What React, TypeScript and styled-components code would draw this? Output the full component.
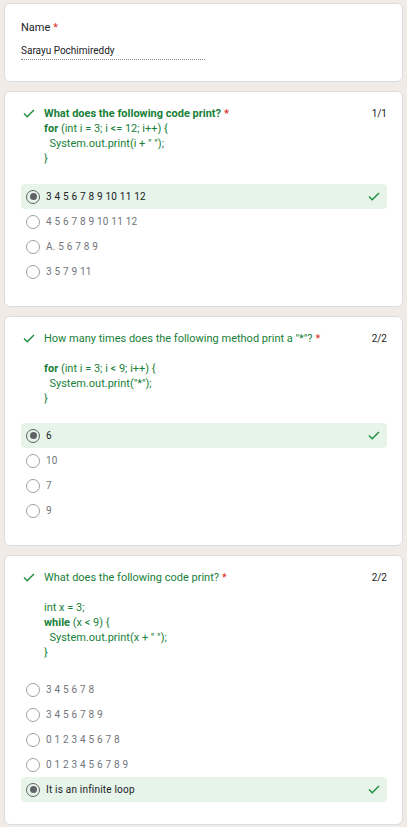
import * as React from 'react';
import styled, {createGlobalStyle} from 'styled-components';

const GlobalStyle = createGlobalStyle`
  body {
    margin: 0;
    background: #f0ebe6;
    font-family: Roboto, "Liberation Sans", Arial, sans-serif;
    color: #202124;
  }
`;

const Page = styled.div`
  display: flex;
  flex-direction: column;
  gap: 9px;
  padding: 3px 4px 4px;
`;

const Card = styled.div`
  background: #fff;
  border: 1px solid #dadce0;
  border-radius: 6px;
  padding: 14px 15px 22px 16px;
`;

const NameCard = styled(Card)`
  padding: 16px 16px 21px;
`;

const Label = styled.div`
  font-size: 11px;
  line-height: 16px;
`;

const Star = styled.span`
  color: #d93025;
  margin-left: 3px;
`;

const NameValue = styled.div`
  margin-top: 8px;
  width: 184px;
  font-size: 10px;
  line-height: 14px;
  padding-bottom: 1px;
  border-bottom: 1px dotted #80868b;
`;

const Header = styled.div`
  display: flex;
  align-items: flex-start;
`;

const IconSlot = styled.div`
  box-sizing: border-box;
  flex: 0 0 23px;
  height: 15px;
  display: flex;
  align-items: center;
  padding-left: 2px;
`;

const Question = styled.div`
  flex: 1 1 auto;
  color: #188038;
  font-size: 11px;
  line-height: 15px;
`;

const Title = styled.div<{bold?: boolean}>`
  font-weight: ${p => (p.bold ? 700 : 400)};
`;

const Code = styled.div<{spaced?: boolean}>`
  margin-top: ${p => (p.spaced ? '15px' : '0')};
  white-space: pre;
`;

const Kw = styled.span`
  font-weight: 700;
`;

const Score = styled.div`
  flex: 0 0 auto;
  font-size: 10px;
  line-height: 15px;
  color: #202124;
`;

const Options = styled.div<{gapTop: number}>`
  margin-top: ${p => p.gapTop}px;
  display: flex;
  flex-direction: column;
`;

const Option = styled.div<{correct?: boolean}>`
  display: flex;
  align-items: center;
  height: 25px;
  padding: 0 7px 0 5px;
  border-radius: 4px;
  background: ${p => (p.correct ? '#e6f4ea' : 'transparent')};
`;

const Radio = styled.span<{checked?: boolean}>`
  box-sizing: border-box;
  width: 14px;
  height: 14px;
  border-radius: 50%;
  border: 1.5px solid ${p => (p.checked ? '#5f6368' : '#9aa0a6')};
  display: flex;
  align-items: center;
  justify-content: center;
  flex: 0 0 auto;

  &::after {
    content: '';
    width: 7px;
    height: 7px;
    border-radius: 50%;
    background: ${p => (p.checked ? '#5f6368' : 'transparent')};
  }
`;

const OptionText = styled.span<{checked?: boolean}>`
  flex: 1 1 auto;
  margin-left: 6px;
  font-size: 10px;
  letter-spacing: 0.2px;
  color: ${p => (p.checked ? '#202124' : '#70757a')};
`;

const Check: React.FC<{size?: number}> = ({size = 12}) => (
  <svg width={size} height={size * 0.75} viewBox="0 0 12 9" fill="none">
    <path d="M1 4.6 L4.2 7.8 L11 1" stroke="#1e8e3e" strokeWidth="1.4" />
  </svg>
);

interface QuizProps {
  title: string;
  bold?: boolean;
  score: string;
  spaced?: boolean;
  code: React.ReactNode;
  options: string[];
  answer: number;
  gapTop?: number;
}

const Quiz: React.FC<QuizProps> = ({title, bold, score, spaced, code, options, answer, gapTop = 17}) => (
  <Card>
    <Header>
      <IconSlot>
        <Check />
      </IconSlot>
      <Question>
        <Title bold={bold}>
          {title}
          <Star>*</Star>
        </Title>
        <Code spaced={spaced}>{code}</Code>
      </Question>
      <Score>{score}</Score>
    </Header>
    <Options gapTop={gapTop}>
      {options.map((option, index) => (
        <Option key={index} correct={index === answer}>
          <Radio checked={index === answer} />
          <OptionText checked={index === answer}>{option}</OptionText>
          {index === answer && <Check />}
        </Option>
      ))}
    </Options>
  </Card>
);

const App: React.FC = () => (
  <>
    <GlobalStyle />
    <Page>
      <NameCard>
        <Label>
          Name<Star>*</Star>
        </Label>
        <NameValue>Sarayu Pochimireddy</NameValue>
      </NameCard>

      <Quiz
        title="What does the following code print?"
        bold
        score="1/1"
        gapTop={18}
        code={
          <>
            <Kw>for</Kw> (int i = 3; i {'<'}= 12; i++) {'{'}
            {'\n'}  System.out.print(i + " ");
            {'\n'}{'}'}
          </>
        }
        options={['3 4 5 6 7 8 9 10 11 12', '4 5 6 7 8 9 10 11 12', 'A. 5 6 7 8 9', '3 5 7 9 11']}
        answer={0}
      />

      <Quiz
        title={'How many times does the following method print a "*"?'}
        score="2/2"
        spaced
        code={
          <>
            <Kw>for</Kw> (int i = 3; i {'<'} 9; i++) {'{'}
            {'\n'}  System.out.print("*");
            {'\n'}{'}'}
          </>
        }
        options={['6', '10', '7', '9']}
        answer={0}
      />

      <Quiz
        title="What does the following code print?"
        score="2/2"
        spaced
        code={
          <>
            int x = 3;
            {'\n'}<Kw>while</Kw> (x {'<'} 9) {'{'}
            {'\n'}  System.out.print(x + " ");
            {'\n'}{'}'}
          </>
        }
        options={['3 4 5 6 7 8', '3 4 5 6 7 8 9', '0 1 2 3 4 5 6 7 8', '0 1 2 3 4 5 6 7 8 9', 'It is an infinite loop']}
        answer={4}
      />
    </Page>
  </>
);

export default App;
